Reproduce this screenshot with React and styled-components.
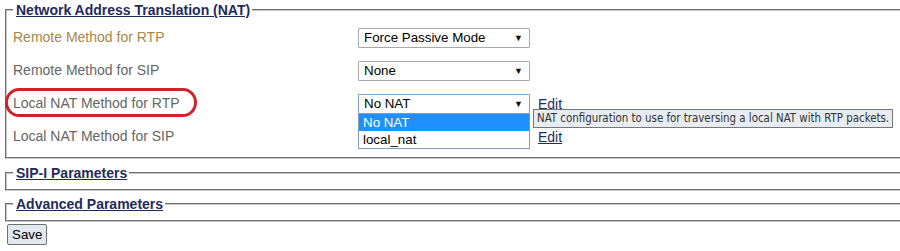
import React from 'react';
import styled, { createGlobalStyle } from 'styled-components';

const GlobalStyle = createGlobalStyle`
  html, body {
    margin: 0;
    padding: 0;
    background: #fff;
    overflow: hidden;
  }
  body {
    font-family: "Liberation Sans", Arial, sans-serif;
  }
`;

const Page = styled.div`
  width: 920px;
  padding: 1px 0 0 5px;
`;

const Group = styled.fieldset`
  margin: 0 0 ${props => props.gap || 0}px 0;
  padding: ${props => props.empty ? '0 6px 7px 6px' : '2px 6px 4px 6px'};
  border: 2px groove #c4c4c4;
  border-right: none;
  position: relative;
`;

const Legend = styled.legend`
  padding: 0 2px 0 3px;
  font-size: 14px;
  line-height: 18px;
  font-weight: bold;
  color: #1f2b5b;
  text-decoration: underline;
`;

const Grid = styled.div`
  display: grid;
  grid-template-columns: 337px 172px auto;
  grid-auto-rows: 33px;
  column-gap: 8px;
  align-items: center;
`;

const Label = styled.span`
  position: relative;
  justify-self: start;
  font-size: 14px;
  line-height: 17px;
  color: ${props => props.accent ? '#a8874b' : '#666'};
`;

const Ring = styled.span`
  position: absolute;
  left: -8px;
  top: -7px;
  width: 186px;
  height: 23px;
  border: 3px solid #d42027;
  border-radius: 14px / 50%;
  pointer-events: none;
`;

const SelectWrap = styled.div`
  position: relative;
  height: 20px;
`;

const SelectBox = styled.div`
  box-sizing: border-box;
  height: 20px;
  display: flex;
  align-items: center;
  justify-content: space-between;
  padding: 0 6px 0 5px;
  border: 1px solid ${props => props.focused ? '#7aa3d6' : '#a9a9a9'};
  border-radius: 1px;
  background: #fff;
  font-size: 13.33px;
  color: #000;
`;

const Arrow = styled.span`
  font-size: 9px;
  color: #111;
`;

const OptionList = styled.div`
  position: absolute;
  left: 0;
  top: calc(100% - 1px);
  width: 172px;
  box-sizing: border-box;
  border: 1px solid #7f9db9;
  background: #fff;
  z-index: 2;
`;

const Option = styled.div`
  height: 17px;
  line-height: 17px;
  padding-left: 4px;
  font-size: 13.33px;
  background: ${props => props.selected ? '#1e90ff' : '#fff'};
  color: ${props => props.selected ? '#fff' : '#000'};
`;

const EditCell = styled.span`
  position: relative;
  justify-self: start;
`;

const EditLink = styled.a`
  font-size: 14px;
  line-height: 17px;
  color: #1f2b5b;
  text-decoration: underline;
`;

const Tooltip = styled.div`
  position: absolute;
  left: -5px;
  top: 14px;
  height: 19px;
  box-sizing: border-box;
  padding: 0 3px;
  border: 1px solid #767676;
  background: #e6ecf1;
  font-family: "DejaVu Sans Condensed", "DejaVu Sans", sans-serif;
  font-size: 11.4px;
  line-height: 17px;
  color: #333;
  white-space: nowrap;
  z-index: 3;
`;

const SaveButton = styled.button`
  margin: 2px 0 0 2px;
  height: 21px;
  padding: 0 4px;
  border: 1px solid #707070;
  border-radius: 2px;
  background: #e3e7ee;
  font-family: "Liberation Sans", Arial, sans-serif;
  font-size: 13.33px;
  color: #000;
`;

const rows = [
  { label: 'Remote Method for RTP', value: 'Force Passive Mode', accent: true },
  { label: 'Remote Method for SIP', value: 'None' },
  { label: 'Local NAT Method for RTP', value: 'No NAT', ring: true, open: true, edit: true,
    tip: 'NAT configuration to use for traversing a local NAT with RTP packets.' },
  { label: 'Local NAT Method for SIP', value: 'No NAT', edit: true, hidden: true },
];

export default function App() {
  return (
    <Page>
      <GlobalStyle />
      <Group gap={5}>
        <Legend>Network Address Translation (NAT)</Legend>
        <Grid>
          {rows.map(row => (
            <React.Fragment key={row.label}>
              <Label accent={row.accent}>
                {row.label}
                {row.ring && <Ring />}
              </Label>
              <SelectWrap>
                {!row.hidden && (
                  <SelectBox focused={row.open}>
                    <span>{row.value}</span>
                    <Arrow>▼</Arrow>
                  </SelectBox>
                )}
                {row.open && (
                  <OptionList>
                    <Option selected>No NAT</Option>
                    <Option>local_nat</Option>
                  </OptionList>
                )}
              </SelectWrap>
              <EditCell>
                {row.edit && <EditLink href="#">Edit</EditLink>}
                {row.tip && <Tooltip>{row.tip}</Tooltip>}
              </EditCell>
            </React.Fragment>
          ))}
        </Grid>
      </Group>
      <Group empty gap={4}>
        <Legend>SIP-I Parameters</Legend>
      </Group>
      <Group empty>
        <Legend>Advanced Parameters</Legend>
      </Group>
      <SaveButton>Save</SaveButton>
    </Page>
  );
}
